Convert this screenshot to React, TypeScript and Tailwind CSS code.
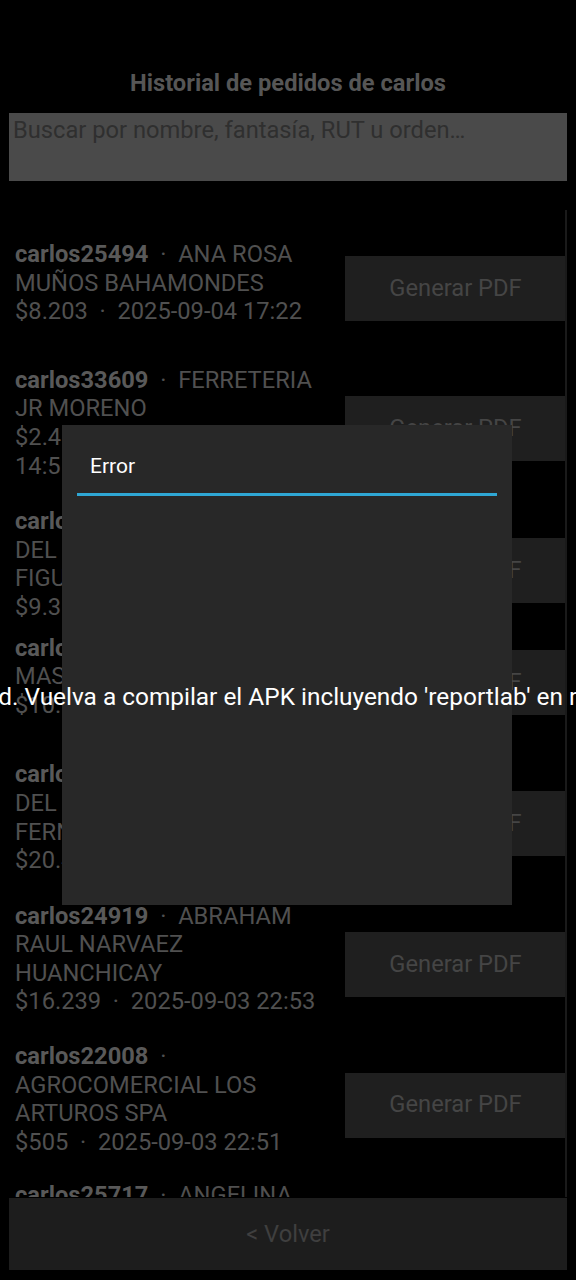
type Pedido = {
  codigo: string;
  primera: string;
  lineas: string[];
  gap: string;
};

const pedidos: Pedido[] = [
  {
    codigo: "carlos25494",
    primera: "ANA ROSA",
    lineas: ["MUÑOS BAHAMONDES", "$8.203  ·  2025-09-04 17:22"],
    gap: "mb-[40px]",
  },
  {
    codigo: "carlos33609",
    primera: "FERRETERIA",
    lineas: ["JR MORENO", "$2.412.350  ·  2025-09-04", "14:51"],
    gap: "mb-[27px]",
  },
  {
    codigo: "carlos28761",
    primera: "MARIA",
    lineas: ["DEL CARMEN", "FIGUEROA SOTO", "$9.350  ·  2025-09-04 10:12"],
    gap: "mb-[12px]",
  },
  {
    codigo: "carlos27340",
    primera: "ALMACEN",
    lineas: ["MASCOTAS", "$10.990  ·  2025-09-04 09:40"],
    gap: "mb-[41px]",
  },
  {
    codigo: "carlos26115",
    primera: "MARIA",
    lineas: ["DEL PILAR", "FERNANDEZ ROJAS", "$20.450  ·  2025-09-03 23:05"],
    gap: "mb-[27px]",
  },
  {
    codigo: "carlos24919",
    primera: "ABRAHAM",
    lineas: ["RAUL NARVAEZ", "HUANCHICAY", "$16.239  ·  2025-09-03 22:53"],
    gap: "mb-[26px]",
  },
  {
    codigo: "carlos22008",
    primera: "",
    lineas: ["AGROCOMERCIAL LOS", "ARTUROS SPA", "$505  ·  2025-09-03 22:51"],
    gap: "mb-[25px]",
  },
  {
    codigo: "carlos25717",
    primera: "ANGELINA",
    lineas: ["TAPIA ROJAS", "$7.800  ·  2025-09-03 21:40"],
    gap: "mb-[26px]",
  },
];

function FilaPedido({ p }: { p: Pedido }) {
  return (
    <div className={`flex items-center ${p.gap}`}>
      <div className="flex-1 text-[23.7px] leading-[28.6px] text-[#505050] whitespace-pre">
        <div>
          <span className="font-bold text-[#595959]">{p.codigo}</span>
          {"  ·  "}
          {p.primera}
        </div>
        {p.lineas.map((l) => (
          <div key={l}>{l}</div>
        ))}
      </div>
      <button className="mt-3 w-[221px] h-[65px] shrink-0 bg-[#1f1f1f] text-[23.7px] text-[#454545]">
        Generar PDF
      </button>
    </div>
  );
}

export default function App() {
  return (
    <div className="relative w-[576px] h-[1280px] bg-black overflow-hidden font-['Roboto',sans-serif]">
      <div className="flex flex-col h-full px-[9px] pb-[10px]">
        <h1 className="pt-[68px] text-center font-bold text-[23.7px] leading-[30px] text-[#565656]">
          Historial de pedidos de carlos
        </h1>
        <div className="mt-[15px] h-[68px] bg-[#4a4a4a] pl-[4px] pt-[3px] text-[23.7px] leading-[28px] text-[#2f2f2f]">
          Buscar por nombre, fantasía, RUT u orden…
        </div>
        <div className="flex-1 overflow-hidden pt-[59px] pl-[6px] pr-px">
          {pedidos.map((p) => (
            <FilaPedido key={p.codigo} p={p} />
          ))}
        </div>
        <button className="mt-px h-[72px] pt-[2px] bg-[#1d1d1d] text-[23.7px] text-[#3f3f3f]">
          &lt; Volver
        </button>
      </div>

      {/* barra de scroll */}
      <div className="absolute left-[565px] top-[210px] w-[2px] h-[987px] bg-[#1a1a1a]" />

      {/* popup de error */}
      <div className="absolute left-[62px] top-[425px] w-[450px] h-[480px] bg-[#282828] flex flex-col">
        <div className="pt-[27px] pl-[28px] text-[21px] leading-[28px] text-white">Error</div>
        <div className="mt-[13px] mx-[15px] h-[3px] bg-[#2fa7d4]" />
        <div className="flex-1 flex items-center justify-center pb-[7px]">
          <p className="whitespace-nowrap text-[24.4px] leading-[30px] text-white">
            Sin disponibilidad. Vuelva a compilar el APK incluyendo 'reportlab' en requirements.txt.
          </p>
        </div>
      </div>
    </div>
  );
}
